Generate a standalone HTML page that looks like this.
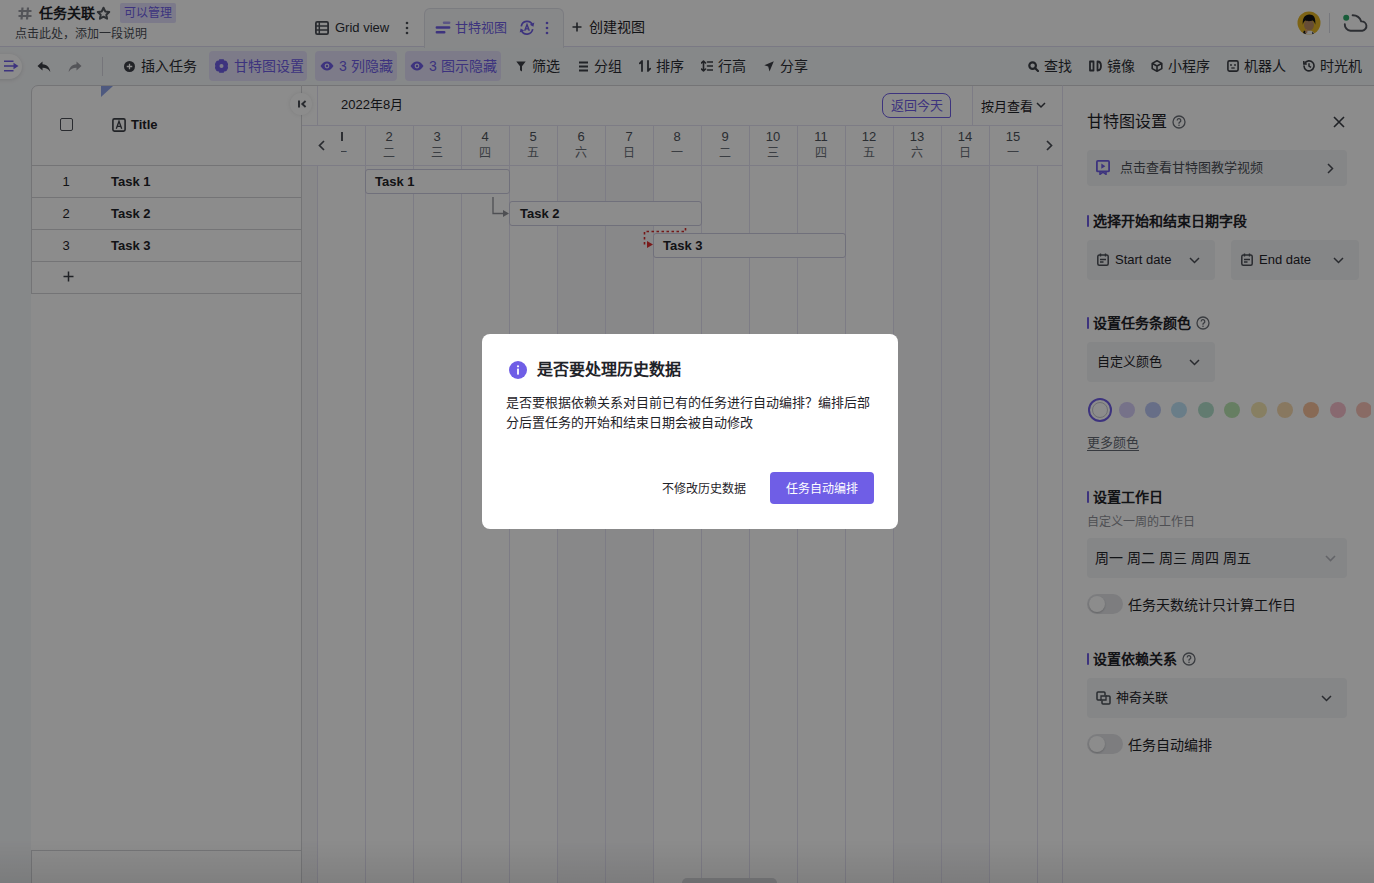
<!DOCTYPE html>
<html lang="zh-CN"><head><meta charset="utf-8">
<style>
*{box-sizing:border-box;margin:0;padding:0}
html,body{width:1374px;height:883px;overflow:hidden}
body{font-family:"Liberation Sans",sans-serif;background:#f5f7f9;color:#1f2329;position:relative}
.a{position:absolute;white-space:nowrap}
svg{display:block}
.t14{font-size:14px;line-height:20px}
.t13{font-size:13px;line-height:18px}
.t12{font-size:12px;line-height:16px}
.pur{color:#6f5ee6}
</style></head><body>
<div id="app" class="a" style="left:0;top:0;width:1374px;height:883px">
  <!-- header -->
  <div class="a" style="left:0;top:0;width:1374px;height:47px;background:#fff;border-bottom:1px solid #dedcf0"></div>
  <svg class="a" style="left:18px;top:7px" width="14" height="13" viewBox="0 0 14 13"><path d="M4.5 0.5L3.5 12.5M10 0.5L9 12.5M0.5 4H13.5M0.5 9H13.5" stroke="#9a9ca3" stroke-width="2.2" fill="none"/></svg>
  <div class="a" style="left:39px;top:3px;font-size:14px;line-height:20px;font-weight:bold;color:#1f2329">任务关联</div>
  <svg class="a" style="left:95.5px;top:5.5px" width="15" height="15" viewBox="0 0 24 24"><path d="M12 2.8l2.8 5.9 6.4.8-4.7 4.4 1.2 6.4L12 17.1l-5.7 3.2 1.2-6.4-4.7-4.4 6.4-.8z" fill="none" stroke="#555960" stroke-width="3.2" stroke-linejoin="round"/></svg>
  <div class="a" style="left:120px;top:3px;width:56px;height:20px;background:#e2defc;border-radius:2px;font-size:12px;line-height:20px;text-align:center;color:#6f5ee6">可以管理</div>
  <div class="a" style="left:15px;top:26px;font-size:12px;line-height:17px;color:#4b4f57">点击此处，添加一段说明</div>
  <!-- tabs -->
  <svg class="a" style="left:315px;top:21px" width="14" height="14" viewBox="0 0 14 14"><rect x="0.9" y="0.9" width="12.2" height="12.2" rx="1.3" fill="none" stroke="#4b4f57" stroke-width="1.8"/><path d="M1 4.9h12M1 9.1h12M4.3 1v12" stroke="#4b4f57" stroke-width="1.5"/></svg>
  <div class="a" style="left:335px;top:18px;font-size:13px;line-height:20px;color:#2b2f36">Grid view</div>
  <svg class="a" style="left:405px;top:21px" width="4" height="14" viewBox="0 0 4 14"><circle cx="2" cy="2" r="1.3" fill="#4b4f57"/><circle cx="2" cy="7" r="1.3" fill="#4b4f57"/><circle cx="2" cy="12" r="1.3" fill="#4b4f57"/></svg>
  <div class="a" style="left:424px;top:8px;width:140px;height:40px;background:#f6f7f9;border:1px solid #e1e2ea;border-bottom:none;border-radius:6px 6px 0 0"></div>
  <svg class="a" style="left:435px;top:20px" width="16" height="15" viewBox="0 0 16 15"><path d="M9 2.8h5.2" stroke="#a79cf2" stroke-width="2.4" stroke-linecap="round"/><path d="M1.8 7.5h12.4M1.8 12.2h7.5" stroke="#6f5ee6" stroke-width="2.4" stroke-linecap="round"/></svg>
  <div class="a" style="left:455px;top:18px;font-size:13px;line-height:20px;color:#6f5ee6">甘特视图</div>
  <svg class="a" style="left:519px;top:20px" width="16" height="15" viewBox="0 0 16 15"><path d="M2.3 6.3A5.9 5.9 0 0 1 13.5 4.8M13.7 9.2A5.9 5.9 0 0 1 2.5 10.6" fill="none" stroke="#6f5ee6" stroke-width="1.7"/><path d="M15.3 2.6l-0.9 4.1-3.6-1.9z" fill="#6f5ee6"/><path d="M0.7 12.6l0.9-4.1 3.6 1.9z" fill="#6f5ee6"/><path d="M5.7 10.8L8 4.6l2.3 6.2M6.5 8.9h3" fill="none" stroke="#6f5ee6" stroke-width="1.4"/></svg>
  <svg class="a" style="left:545px;top:21px" width="4" height="14" viewBox="0 0 4 14"><circle cx="2" cy="2" r="1.3" fill="#6f5ee6"/><circle cx="2" cy="7" r="1.3" fill="#6f5ee6"/><circle cx="2" cy="12" r="1.3" fill="#6f5ee6"/></svg>
  <svg class="a" style="left:572px;top:22px" width="10" height="10" viewBox="0 0 10 10"><path d="M5 0.5v9M0.5 5h9" stroke="#3b3e45" stroke-width="1.6"/></svg>
  <div class="a" style="left:589px;top:17px;font-size:14px;line-height:20px;color:#1f2329">创建视图</div>

  <!-- toolbar -->
  <div class="a" style="left:-12px;top:54px;width:34px;height:25px;background:#fff;border-radius:13px;box-shadow:0 1px 4px rgba(0,0,0,0.12)"></div>
  <svg class="a" style="left:4px;top:60px" width="15" height="12" viewBox="0 0 15 12"><path d="M0 1.3h9.5M0 6h10M0 10.7h9.5" stroke="#6f5ee6" stroke-width="1.5"/><path d="M9.5 2.8L14.5 6l-5 3.2z" fill="#6f5ee6"/></svg>
  <svg class="a" style="left:36.5px;top:60.5px" width="14" height="12" viewBox="0 0 14 12"><path d="M5.5 0.5L0.5 5l5 4.5V6.8c3.5 0 6 1 7.8 4.2C13 7 10.5 3.8 5.5 3.3z" fill="#3b3e45"/></svg>
  <svg class="a" style="left:68px;top:60.5px" width="14" height="12" viewBox="0 0 14 12"><path d="M8.5 0.5L13.5 5l-5 4.5V6.8C5 6.8 2.5 7.8 0.7 11 1 7 3.5 3.8 8.5 3.3z" fill="#9a9ca3"/></svg>
  <div class="a" style="left:102px;top:57px;width:1px;height:19px;background:#d5d6de"></div>
  <svg class="a" style="left:124px;top:61px" width="11" height="11" viewBox="0 0 12 12"><circle cx="6" cy="6" r="6" fill="#3d4047"/><path d="M6 3v6M3 6h6" stroke="#fff" stroke-width="1.4"/></svg>
  <div class="a t14" style="left:141px;top:56px;color:#2a2d33">插入任务</div>
  <div class="a" style="left:209px;top:51px;width:98px;height:30px;background:#e4e1fa;border-radius:4px"></div>
  <svg class="a" style="left:215px;top:59px" width="13" height="14" viewBox="0 0 13 14"><path d="M3.65 2.06 L4.51 0.50 L8.49 0.50 L9.35 2.06 L11.14 2.03 L13.13 5.47 L12.20 7.00 L13.13 8.53 L11.14 11.97 L9.35 11.94 L8.49 13.50 L4.51 13.50 L3.65 11.94 L1.86 11.97 L-0.13 8.53 L0.80 7.00 L-0.13 5.47 L1.86 2.03Z" fill="#6f5ee6" stroke="#6f5ee6" stroke-width="0.6" stroke-linejoin="round"/><circle cx="6.5" cy="7" r="2" fill="#e4e1fa"/></svg>
  <div class="a t14 pur" style="left:234px;top:56px">甘特图设置</div>
  <div class="a" style="left:315px;top:51px;width:82px;height:30px;background:#e4e1fa;border-radius:4px"></div>
  <svg class="a" style="left:320px;top:61px" width="14" height="10" viewBox="0 0 14 10"><path d="M0.5 5C2.5 1.8 4.6 0.5 7 0.5s4.5 1.3 6.5 4.5C11.5 8.2 9.4 9.5 7 9.5S2.5 8.2 0.5 5z" fill="#6f5ee6"/><circle cx="7" cy="5" r="2.4" fill="#e4e1fa"/><circle cx="7" cy="5" r="1.2" fill="#6f5ee6"/></svg>
  <div class="a t14 pur" style="left:339px;top:56px">3 列隐藏</div>
  <div class="a" style="left:405px;top:51px;width:96px;height:30px;background:#e4e1fa;border-radius:4px"></div>
  <svg class="a" style="left:410px;top:61px" width="14" height="10" viewBox="0 0 14 10"><path d="M0.5 5C2.5 1.8 4.6 0.5 7 0.5s4.5 1.3 6.5 4.5C11.5 8.2 9.4 9.5 7 9.5S2.5 8.2 0.5 5z" fill="#6f5ee6"/><circle cx="7" cy="5" r="2.4" fill="#e4e1fa"/><circle cx="7" cy="5" r="1.2" fill="#6f5ee6"/></svg>
  <div class="a t14 pur" style="left:429px;top:56px">3 图示隐藏</div>
  <svg class="a" style="left:516px;top:61px" width="10" height="11" viewBox="0 0 10 11"><path d="M0.3 0.5h9.4L6 5.2V10.5L4 9.3V5.2z" fill="#3d4047"/></svg>
  <div class="a t14" style="left:532px;top:56px;color:#2a2d33">筛选</div>
  <svg class="a" style="left:579px;top:61px" width="9" height="11" viewBox="0 0 9 11"><path d="M0.5 1.5h8M0.5 5.5h8M0.5 9.5h8" stroke="#3d4047" stroke-width="2" stroke-linecap="round"/></svg>
  <div class="a t14" style="left:594px;top:56px;color:#2a2d33">分组</div>
  <svg class="a" style="left:639px;top:60px" width="12" height="12" viewBox="0 0 12 12"><path d="M3 11V1L0.8 3.3M9 1v10l2.2-2.3" fill="none" stroke="#3d4047" stroke-width="1.8" stroke-linecap="round" stroke-linejoin="round"/></svg>
  <div class="a t14" style="left:656px;top:56px;color:#2a2d33">排序</div>
  <svg class="a" style="left:701px;top:60px" width="12" height="12" viewBox="0 0 12 12"><path d="M2.5 1v10M0.5 3l2-2 2 2M0.5 9l2 2 2-2M6.5 2h5M6.5 6h5M6.5 10h5" fill="none" stroke="#3d4047" stroke-width="1.6" stroke-linecap="round" stroke-linejoin="round"/></svg>
  <div class="a t14" style="left:718px;top:56px;color:#2a2d33">行高</div>
  <svg class="a" style="left:764px;top:61px" width="10" height="11" viewBox="0 0 10 11"><path d="M9.8 0.2L0.3 4.2l3.9 1.4 1.3 4.9z" fill="#3d4047"/></svg>
  <div class="a t14" style="left:780px;top:56px;color:#2a2d33">分享</div>
  <svg class="a" style="left:1028px;top:61px" width="11" height="11" viewBox="0 0 11 11"><circle cx="4.6" cy="4.6" r="3.3" fill="none" stroke="#3d4047" stroke-width="2.2"/><path d="M7 7l3 3" stroke="#3d4047" stroke-width="2.2" stroke-linecap="round"/></svg>
  <div class="a t14" style="left:1044px;top:56px;color:#2a2d33">查找</div>
  <svg class="a" style="left:1089px;top:60px" width="13" height="12" viewBox="0 0 13 12"><path d="M1 1.5h3.5v9H1zM8.5 1.5c2.3 0 3.5 2 3.5 4.5s-1.2 4.5-3.5 4.5z" fill="none" stroke="#3d4047" stroke-width="1.8" stroke-linejoin="round"/></svg>
  <div class="a t14" style="left:1107px;top:56px;color:#2a2d33">镜像</div>
  <svg class="a" style="left:1151px;top:60px" width="12" height="12" viewBox="0 0 12 12"><path d="M6 0.8l4.8 2.6v5.2L6 11.2 1.2 8.6V3.4zM1.4 3.5L6 6l4.6-2.5M6 6v5" fill="none" stroke="#3d4047" stroke-width="1.6" stroke-linejoin="round"/></svg>
  <div class="a t14" style="left:1168px;top:56px;color:#2a2d33">小程序</div>
  <svg class="a" style="left:1227px;top:60px" width="12" height="12" viewBox="0 0 12 12"><rect x="0.9" y="0.9" width="10.2" height="10.2" rx="1.5" fill="none" stroke="#3d4047" stroke-width="1.6"/><circle cx="4" cy="5" r="0.9" fill="#3d4047"/><circle cx="8" cy="5" r="0.9" fill="#3d4047"/><path d="M4.3 8h3.4" stroke="#3d4047" stroke-width="1.3"/></svg>
  <div class="a t14" style="left:1244px;top:56px;color:#2a2d33">机器人</div>
  <svg class="a" style="left:1303px;top:60px" width="12" height="12" viewBox="0 0 12 12"><path d="M1.6 3.5A5 5 0 1 1 1 6" fill="none" stroke="#3d4047" stroke-width="1.6" stroke-linecap="round"/><path d="M0.8 1v3h3" fill="none" stroke="#3d4047" stroke-width="1.5"/><path d="M6 3.3V6.2l2 1.2" fill="none" stroke="#3d4047" stroke-width="1.5"/></svg>
  <div class="a t14" style="left:1320px;top:56px;color:#2a2d33">时光机</div>

  <!-- grid left panel -->
  <div class="a" style="left:31px;top:85px;width:271px;height:820px;background:#fff;border:1px solid #d3d4d8;border-radius:7px 0 0 0"></div>
  <svg class="a" style="left:101px;top:86px" width="12" height="11" viewBox="0 0 12 11"><path d="M0 0h12L0 11z" fill="#8fa3e8"/></svg>
  <div class="a" style="left:60px;top:118px;width:13px;height:13px;border:1.5px solid #4b4f57;border-radius:2px"></div>
  <svg class="a" style="left:112px;top:118px" width="14" height="14" viewBox="0 0 14 14"><rect x="0.9" y="0.9" width="12.2" height="12.2" rx="1.5" fill="none" stroke="#3d4047" stroke-width="1.6"/><path d="M4.3 10.8L7 3.2l2.7 7.6M5.2 8.3h3.6" fill="none" stroke="#3d4047" stroke-width="1.3"/></svg>
  <div class="a t13" style="left:131px;top:116px;font-weight:bold;color:#1f2329">Title</div>
  <div class="a" style="left:32px;top:165px;width:270px;height:1px;background:#d3d4d8"></div>
  <div class="a" style="left:32px;top:197px;width:270px;height:1px;background:#d3d4d8"></div>
  <div class="a" style="left:32px;top:229px;width:270px;height:1px;background:#d3d4d8"></div>
  <div class="a" style="left:32px;top:261px;width:270px;height:1px;background:#d3d4d8"></div>
  <div class="a" style="left:32px;top:293px;width:270px;height:1px;background:#d3d4d8"></div>
  <div class="a" style="left:32px;top:850px;width:270px;height:1px;background:#d3d4d8"></div>
  <div class="a" style="left:31px;top:294px;width:1px;height:556px;background:#fff"></div>
  <div class="a t13" style="left:56px;top:173px;width:20px;text-align:center">1</div>
  <div class="a t13" style="left:56px;top:205px;width:20px;text-align:center">2</div>
  <div class="a t13" style="left:56px;top:237px;width:20px;text-align:center">3</div>
  <svg class="a" style="left:63px;top:271px" width="11" height="11" viewBox="0 0 11 11"><path d="M5.5 0.5v10M0.5 5.5h10" stroke="#3b3e45" stroke-width="1.5"/></svg>
  <div class="a t13" style="left:111px;top:173px;font-weight:bold">Task 1</div>
  <div class="a t13" style="left:111px;top:205px;font-weight:bold">Task 2</div>
  <div class="a t13" style="left:111px;top:237px;font-weight:bold">Task 3</div>
  <!-- gantt -->
  <div class="a" style="left:302px;top:85px;width:760px;height:820px;background:#fff;border-top:1px solid #d3d4d8"></div>
  <div class="a" style="left:302px;top:166px;width:15px;height:720px;background:#f7f7f9"></div>
  <div class="a" style="left:557px;top:166px;width:48px;height:720px;background:#f8f8fa"></div>
  <div class="a" style="left:605px;top:166px;width:48px;height:720px;background:#f8f8fa"></div>
  <div class="a" style="left:893px;top:166px;width:48px;height:720px;background:#f8f8fa"></div>
  <div class="a" style="left:941px;top:166px;width:48px;height:720px;background:#f8f8fa"></div>
  <div class="a" style="left:317px;top:86px;width:1px;height:39px;background:#e4e2f2"></div>
  <div class="a" style="left:317px;top:165px;width:1px;height:720px;background:#e4e2f2"></div>
  <div class="a" style="left:302px;top:125px;width:760px;height:1px;background:#e4e2f2"></div>
  <div class="a" style="left:302px;top:165px;width:760px;height:1px;background:#e4e2f2"></div>
  <div class="a" style="left:972px;top:86px;width:1px;height:39px;background:#e4e2f2"></div>
  <div class="a" style="left:341.2px;top:132px;width:1.8px;height:9px;background:#51555c"></div>
  <div class="a" style="left:317px;top:145px;width:48px;text-align:center;font-size:12px;line-height:17px;color:#6b7078">一</div>
  <div class="a" style="left:365px;top:126px;width:1px;height:39px;background:#e4e2f2"></div>
  <div class="a" style="left:365px;top:166px;width:1px;height:720px;background:#e4e2f2"></div>
  <div class="a" style="left:365px;top:128px;width:48px;text-align:center;font-size:13px;line-height:18px;color:#4e535b">2</div>
  <div class="a" style="left:365px;top:145px;width:48px;text-align:center;font-size:12px;line-height:17px;color:#6b7078">二</div>
  <div class="a" style="left:413px;top:126px;width:1px;height:39px;background:#e4e2f2"></div>
  <div class="a" style="left:413px;top:166px;width:1px;height:720px;background:#e4e2f2"></div>
  <div class="a" style="left:413px;top:128px;width:48px;text-align:center;font-size:13px;line-height:18px;color:#4e535b">3</div>
  <div class="a" style="left:413px;top:145px;width:48px;text-align:center;font-size:12px;line-height:17px;color:#6b7078">三</div>
  <div class="a" style="left:461px;top:126px;width:1px;height:39px;background:#e4e2f2"></div>
  <div class="a" style="left:461px;top:166px;width:1px;height:720px;background:#e4e2f2"></div>
  <div class="a" style="left:461px;top:128px;width:48px;text-align:center;font-size:13px;line-height:18px;color:#4e535b">4</div>
  <div class="a" style="left:461px;top:145px;width:48px;text-align:center;font-size:12px;line-height:17px;color:#6b7078">四</div>
  <div class="a" style="left:509px;top:126px;width:1px;height:39px;background:#e4e2f2"></div>
  <div class="a" style="left:509px;top:166px;width:1px;height:720px;background:#e4e2f2"></div>
  <div class="a" style="left:509px;top:128px;width:48px;text-align:center;font-size:13px;line-height:18px;color:#4e535b">5</div>
  <div class="a" style="left:509px;top:145px;width:48px;text-align:center;font-size:12px;line-height:17px;color:#6b7078">五</div>
  <div class="a" style="left:557px;top:126px;width:1px;height:39px;background:#e4e2f2"></div>
  <div class="a" style="left:557px;top:166px;width:1px;height:720px;background:#e4e2f2"></div>
  <div class="a" style="left:557px;top:128px;width:48px;text-align:center;font-size:13px;line-height:18px;color:#4e535b">6</div>
  <div class="a" style="left:557px;top:145px;width:48px;text-align:center;font-size:12px;line-height:17px;color:#6b7078">六</div>
  <div class="a" style="left:605px;top:126px;width:1px;height:39px;background:#e4e2f2"></div>
  <div class="a" style="left:605px;top:166px;width:1px;height:720px;background:#e4e2f2"></div>
  <div class="a" style="left:605px;top:128px;width:48px;text-align:center;font-size:13px;line-height:18px;color:#4e535b">7</div>
  <div class="a" style="left:605px;top:145px;width:48px;text-align:center;font-size:12px;line-height:17px;color:#6b7078">日</div>
  <div class="a" style="left:653px;top:126px;width:1px;height:39px;background:#e4e2f2"></div>
  <div class="a" style="left:653px;top:166px;width:1px;height:720px;background:#e4e2f2"></div>
  <div class="a" style="left:653px;top:128px;width:48px;text-align:center;font-size:13px;line-height:18px;color:#4e535b">8</div>
  <div class="a" style="left:653px;top:145px;width:48px;text-align:center;font-size:12px;line-height:17px;color:#6b7078">一</div>
  <div class="a" style="left:701px;top:126px;width:1px;height:39px;background:#e4e2f2"></div>
  <div class="a" style="left:701px;top:166px;width:1px;height:720px;background:#e4e2f2"></div>
  <div class="a" style="left:701px;top:128px;width:48px;text-align:center;font-size:13px;line-height:18px;color:#4e535b">9</div>
  <div class="a" style="left:701px;top:145px;width:48px;text-align:center;font-size:12px;line-height:17px;color:#6b7078">二</div>
  <div class="a" style="left:749px;top:126px;width:1px;height:39px;background:#e4e2f2"></div>
  <div class="a" style="left:749px;top:166px;width:1px;height:720px;background:#e4e2f2"></div>
  <div class="a" style="left:749px;top:128px;width:48px;text-align:center;font-size:13px;line-height:18px;color:#4e535b">10</div>
  <div class="a" style="left:749px;top:145px;width:48px;text-align:center;font-size:12px;line-height:17px;color:#6b7078">三</div>
  <div class="a" style="left:797px;top:126px;width:1px;height:39px;background:#e4e2f2"></div>
  <div class="a" style="left:797px;top:166px;width:1px;height:720px;background:#e4e2f2"></div>
  <div class="a" style="left:797px;top:128px;width:48px;text-align:center;font-size:13px;line-height:18px;color:#4e535b">11</div>
  <div class="a" style="left:797px;top:145px;width:48px;text-align:center;font-size:12px;line-height:17px;color:#6b7078">四</div>
  <div class="a" style="left:845px;top:126px;width:1px;height:39px;background:#e4e2f2"></div>
  <div class="a" style="left:845px;top:166px;width:1px;height:720px;background:#e4e2f2"></div>
  <div class="a" style="left:845px;top:128px;width:48px;text-align:center;font-size:13px;line-height:18px;color:#4e535b">12</div>
  <div class="a" style="left:845px;top:145px;width:48px;text-align:center;font-size:12px;line-height:17px;color:#6b7078">五</div>
  <div class="a" style="left:893px;top:126px;width:1px;height:39px;background:#e4e2f2"></div>
  <div class="a" style="left:893px;top:166px;width:1px;height:720px;background:#e4e2f2"></div>
  <div class="a" style="left:893px;top:128px;width:48px;text-align:center;font-size:13px;line-height:18px;color:#4e535b">13</div>
  <div class="a" style="left:893px;top:145px;width:48px;text-align:center;font-size:12px;line-height:17px;color:#6b7078">六</div>
  <div class="a" style="left:941px;top:126px;width:1px;height:39px;background:#e4e2f2"></div>
  <div class="a" style="left:941px;top:166px;width:1px;height:720px;background:#e4e2f2"></div>
  <div class="a" style="left:941px;top:128px;width:48px;text-align:center;font-size:13px;line-height:18px;color:#4e535b">14</div>
  <div class="a" style="left:941px;top:145px;width:48px;text-align:center;font-size:12px;line-height:17px;color:#6b7078">日</div>
  <div class="a" style="left:989px;top:126px;width:1px;height:39px;background:#e4e2f2"></div>
  <div class="a" style="left:989px;top:166px;width:1px;height:720px;background:#e4e2f2"></div>
  <div class="a" style="left:989px;top:128px;width:48px;text-align:center;font-size:13px;line-height:18px;color:#4e535b">15</div>
  <div class="a" style="left:989px;top:145px;width:48px;text-align:center;font-size:12px;line-height:17px;color:#6b7078">一</div>
  <div class="a" style="left:1037px;top:166px;width:1px;height:720px;background:#e4e2f2"></div>
  <div class="a" style="left:302px;top:126px;width:39px;height:39px;background:#fff"></div>
  <svg class="a" style="left:318px;top:140px" width="7" height="11" viewBox="0 0 7 11"><path d="M6 1L1.5 5.5 6 10" fill="none" stroke="#4b4f57" stroke-width="1.7"/></svg>
  <div class="a" style="left:1037px;top:126px;width:25px;height:39px;background:#fff"></div>
  <svg class="a" style="left:1046px;top:140px" width="7" height="11" viewBox="0 0 7 11"><path d="M1 1l4.5 4.5L1 10" fill="none" stroke="#4b4f57" stroke-width="1.7"/></svg>
  <div class="a" style="left:290px;top:93px;width:22px;height:22px;border-radius:50%;background:#fff;box-shadow:0 0 4px rgba(0,0,0,0.10)"></div>
  <svg class="a" style="left:297px;top:99px" width="10" height="10" viewBox="0 0 10 10"><path d="M2 1.5v7" stroke="#4b4f57" stroke-width="2"/><path d="M8.6 2L5.3 5l3.3 3" fill="none" stroke="#4b4f57" stroke-width="1.9"/></svg>
  <div class="a t13" style="left:341px;top:96px;color:#1f2329">2022年8月</div>
  <div class="a" style="left:882px;top:93px;width:69px;height:25px;border:1.5px solid #6f5ee6;border-radius:8px 8px 2px 8px;font-size:13px;line-height:24px;text-align:center;color:#6f5ee6">返回今天</div>
  <div class="a t13" style="left:981px;top:98px;color:#1f2329">按月查看</div>
  <svg class="a" style="left:1036px;top:102px" width="10" height="7" viewBox="0 0 10 7"><path d="M1 1l4 4 4-4" fill="none" stroke="#3b3e45" stroke-width="1.5"/></svg>
  <!-- bars -->
  <div class="a" style="left:365px;top:169px;width:145px;height:25px;background:#fff;border:1px solid #cdcce0;border-radius:3px"></div>
  <div class="a t13" style="left:375px;top:173px;font-weight:bold">Task 1</div>
  <div class="a" style="left:509px;top:201px;width:193px;height:25px;background:#fff;border:1px solid #cdcce0;border-radius:3px"></div>
  <div class="a t13" style="left:520px;top:205px;font-weight:bold">Task 2</div>
  <div class="a" style="left:653px;top:233px;width:193px;height:25px;background:#fff;border:1px solid #cdcce0;border-radius:3px"></div>
  <div class="a t13" style="left:663px;top:237px;font-weight:bold">Task 3</div>
  <svg class="a" style="left:480px;top:190px" width="220" height="70" viewBox="480 190 220 70">
    <path d="M493 197V213.5H504" fill="none" stroke="#8f9198" stroke-width="1.3"/>
    <path d="M503 210l6 3.5-6 3.5z" fill="#8f9198"/>
    <path d="M685.5 228V231.5H644.5V244.5H648" fill="none" stroke="#d42a2a" stroke-width="1.6" stroke-dasharray="2.5 2.5"/>
    <path d="M647 241l6 3.5-6 3.5z" fill="#e03131"/>
  </svg>
  <!-- right panel -->
  <div class="a" style="left:1062px;top:85px;width:312px;height:800px;background:#fff;border-left:1px solid #e4e2f2;border-top:1px solid #d3d4d8"></div>

  <div class="a" style="left:1087px;top:112px;font-size:16px;line-height:20px;color:#1f2329">甘特图设置</div>
  <svg class="a" style="left:1172px;top:115px" width="14" height="14" viewBox="0 0 14 14"><circle cx="7" cy="7" r="6" fill="none" stroke="#6b6f77" stroke-width="1.3"/><path d="M5.2 5.5a1.8 1.8 0 1 1 2.6 1.6c-.6.3-.8.6-.8 1.2v.4" fill="none" stroke="#6b6f77" stroke-width="1.3"/><circle cx="7" cy="10.3" r="0.8" fill="#6b6f77"/></svg>
  <svg class="a" style="left:1333px;top:116px" width="12" height="12" viewBox="0 0 12 12"><path d="M1 1l10 10M11 1L1 11" stroke="#3b3e45" stroke-width="1.6"/></svg>
  <div class="a" style="left:1087px;top:150px;width:260px;height:36px;background:#f3f4f6;border-radius:4px"></div>
  <svg class="a" style="left:1096px;top:160px" width="14" height="15" viewBox="0 0 14 15"><rect x="0.9" y="0.9" width="12.2" height="10.5" rx="1" fill="none" stroke="#6f5ee6" stroke-width="1.8"/><path d="M5.3 3.6v5.2L9.4 6.2z" fill="#6f5ee6"/><path d="M4 11.5v2.8l3-2.3 3 2.3v-2.8" fill="none" stroke="#6f5ee6" stroke-width="1.6"/></svg>
  <div class="a t13" style="left:1120px;top:159px;color:#4b4f57">点击查看甘特图教学视频</div>
  <svg class="a" style="left:1327px;top:163px" width="7" height="11" viewBox="0 0 7 11"><path d="M1 1l4.5 4.5L1 10" fill="none" stroke="#4b4f57" stroke-width="1.5"/></svg>
  <div class="a" style="left:1087px;top:215px;width:2px;height:12px;background:#6f5ee6;border-radius:1px"></div>
  <div class="a t14" style="left:1093px;top:211px;font-weight:bold;color:#1f2329">选择开始和结束日期字段</div>
  <div class="a" style="left:1087px;top:240px;width:128px;height:40px;background:#f3f4f6;border-radius:4px"></div>
  <svg class="a" style="left:1097px;top:253px" width="12" height="13" viewBox="0 0 12 13"><rect x="0.8" y="2" width="10.4" height="10.2" rx="1.5" fill="none" stroke="#4b4f57" stroke-width="1.5"/><path d="M3.5 0.5v3M8.5 0.5v3M3 6.5h6M3 9h3.5" stroke="#4b4f57" stroke-width="1.4"/></svg>
  <div class="a t13" style="left:1115px;top:251px;color:#1f2329">Start date</div>
  <svg class="a" style="left:1189px;top:257px" width="11" height="7" viewBox="0 0 11 7"><path d="M1 1l4.5 4.5L10 1" fill="none" stroke="#4b4f57" stroke-width="1.5"/></svg>
  <div class="a" style="left:1231px;top:240px;width:128px;height:40px;background:#f3f4f6;border-radius:4px"></div>
  <svg class="a" style="left:1241px;top:253px" width="12" height="13" viewBox="0 0 12 13"><rect x="0.8" y="2" width="10.4" height="10.2" rx="1.5" fill="none" stroke="#4b4f57" stroke-width="1.5"/><path d="M3.5 0.5v3M8.5 0.5v3M3 6.5h6M3 9h3.5" stroke="#4b4f57" stroke-width="1.4"/></svg>
  <div class="a t13" style="left:1259px;top:251px;color:#1f2329">End date</div>
  <svg class="a" style="left:1333px;top:257px" width="11" height="7" viewBox="0 0 11 7"><path d="M1 1l4.5 4.5L10 1" fill="none" stroke="#4b4f57" stroke-width="1.5"/></svg>
  <div class="a" style="left:1087px;top:317px;width:2px;height:12px;background:#6f5ee6;border-radius:1px"></div>
  <div class="a t14" style="left:1093px;top:313px;font-weight:bold;color:#1f2329">设置任务条颜色</div>
  <svg class="a" style="left:1196px;top:316px" width="14" height="14" viewBox="0 0 14 14"><circle cx="7" cy="7" r="6" fill="none" stroke="#6b6f77" stroke-width="1.3"/><path d="M5.2 5.5a1.8 1.8 0 1 1 2.6 1.6c-.6.3-.8.6-.8 1.2v.4" fill="none" stroke="#6b6f77" stroke-width="1.3"/><circle cx="7" cy="10.3" r="0.8" fill="#6b6f77"/></svg>
  <div class="a" style="left:1087px;top:342px;width:128px;height:40px;background:#f3f4f6;border-radius:4px"></div>
  <div class="a t13" style="left:1097px;top:353px;color:#1f2329">自定义颜色</div>
  <svg class="a" style="left:1189px;top:359px" width="11" height="7" viewBox="0 0 11 7"><path d="M1 1l4.5 4.5L10 1" fill="none" stroke="#4b4f57" stroke-width="1.5"/></svg>
  <div class="a" style="left:1088px;top:398px;width:24px;height:24px;border-radius:50%;border:2px solid #6f5ee6"></div>
  <div class="a" style="left:1092px;top:402px;width:16px;height:16px;border-radius:50%;border:1px solid #c9cbd1;background:#fff"></div>

  <div class="a" style="left:1119px;top:402px;width:16px;height:16px;border-radius:50%;background:#d8cffa"></div>
  <div class="a" style="left:1145px;top:402px;width:16px;height:16px;border-radius:50%;background:#bcc8f6"></div>
  <div class="a" style="left:1171px;top:402px;width:16px;height:16px;border-radius:50%;background:#c0e3f8"></div>
  <div class="a" style="left:1198px;top:402px;width:16px;height:16px;border-radius:50%;background:#b2e1cd"></div>
  <div class="a" style="left:1224px;top:402px;width:16px;height:16px;border-radius:50%;background:#bbe5b2"></div>
  <div class="a" style="left:1251px;top:402px;width:16px;height:16px;border-radius:50%;background:#f6e7b2"></div>
  <div class="a" style="left:1277px;top:402px;width:16px;height:16px;border-radius:50%;background:#f7dab0"></div>
  <div class="a" style="left:1303px;top:402px;width:16px;height:16px;border-radius:50%;background:#f7c19b"></div>
  <div class="a" style="left:1330px;top:402px;width:16px;height:16px;border-radius:50%;background:#f7c0cd"></div>
  <div class="a" style="left:1356px;top:402px;width:15px;height:16px;overflow:hidden"><div class="a" style="left:0;top:0;width:16px;height:16px;border-radius:50%;background:#f9c4b9"></div></div>
  <div class="a t13" style="left:1087px;top:434px;color:#646a73;text-decoration:underline;text-underline-offset:3px">更多颜色</div>
  <div class="a" style="left:1087px;top:491px;width:2px;height:12px;background:#6f5ee6;border-radius:1px"></div>
  <div class="a t14" style="left:1093px;top:487px;font-weight:bold;color:#1f2329">设置工作日</div>
  <div class="a t12" style="left:1087px;top:514px;color:#8f9198">自定义一周的工作日</div>
  <div class="a" style="left:1087px;top:538px;width:260px;height:40px;background:#f3f4f6;border-radius:4px"></div>
  <div class="a t14" style="left:1095px;top:548px;color:#1f2329;word-spacing:0px">周一 周二 周三 周四 周五</div>
  <svg class="a" style="left:1325px;top:555px" width="11" height="7" viewBox="0 0 11 7"><path d="M1 1l4.5 4.5L10 1" fill="none" stroke="#b5b7be" stroke-width="1.6"/></svg>
  <div class="a" style="left:1087px;top:594px;width:36px;height:20px;border-radius:10px;background:#e3e4e8"></div>
  <div class="a" style="left:1089px;top:596px;width:16px;height:16px;border-radius:50%;background:#fff;box-shadow:0 1px 2px rgba(0,0,0,0.2)"></div>
  <div class="a t14" style="left:1128px;top:595px;color:#1f2329">任务天数统计只计算工作日</div>
  <div class="a" style="left:1087px;top:653px;width:2px;height:12px;background:#6f5ee6;border-radius:1px"></div>
  <div class="a t14" style="left:1093px;top:649px;font-weight:bold;color:#1f2329">设置依赖关系</div>
  <svg class="a" style="left:1182px;top:652px" width="14" height="14" viewBox="0 0 14 14"><circle cx="7" cy="7" r="6" fill="none" stroke="#6b6f77" stroke-width="1.3"/><path d="M5.2 5.5a1.8 1.8 0 1 1 2.6 1.6c-.6.3-.8.6-.8 1.2v.4" fill="none" stroke="#6b6f77" stroke-width="1.3"/><circle cx="7" cy="10.3" r="0.8" fill="#6b6f77"/></svg>
  <div class="a" style="left:1087px;top:678px;width:260px;height:40px;background:#f3f4f6;border-radius:4px"></div>
  <svg class="a" style="left:1096px;top:691px" width="15" height="14" viewBox="0 0 15 14"><path d="M5 9H2a1 1 0 0 1-1-1V2a1 1 0 0 1 1-1h6a1 1 0 0 1 1 1v2.5" fill="none" stroke="#4b4f57" stroke-width="1.5"/><path d="M10 5h3a1 1 0 0 1 1 1v6a1 1 0 0 1-1 1H7a1 1 0 0 1-1-1V9.5" fill="none" stroke="#4b4f57" stroke-width="1.5"/><path d="M5 5h5v4H5z" fill="none" stroke="#4b4f57" stroke-width="1.3"/></svg>
  <div class="a t13" style="left:1116px;top:689px;color:#1f2329">神奇关联</div>
  <svg class="a" style="left:1321px;top:695px" width="11" height="7" viewBox="0 0 11 7"><path d="M1 1l4.5 4.5L10 1" fill="none" stroke="#4b4f57" stroke-width="1.5"/></svg>
  <div class="a" style="left:1087px;top:734px;width:36px;height:20px;border-radius:10px;background:#e3e4e8"></div>
  <div class="a" style="left:1089px;top:736px;width:16px;height:16px;border-radius:50%;background:#fff;box-shadow:0 1px 2px rgba(0,0,0,0.2)"></div>
  <div class="a t14" style="left:1128px;top:735px;color:#1f2329">任务自动编排</div>
  <div class="a" style="left:682px;top:878px;width:95px;height:10px;border-radius:5px;background:#d9dade"></div>
  <!-- avatar / cloud -->
  <svg class="a" style="left:1297px;top:11px" width="24" height="24" viewBox="0 0 24 24"><defs><clipPath id="cav"><circle cx="12" cy="12" r="11.5"/></clipPath></defs><circle cx="12" cy="12" r="11.5" fill="#e3b526"/><g clip-path="url(#cav)"><path d="M6.5 24c0-3 2.3-4.6 5.5-4.6s5.5 1.6 5.5 4.6z" fill="#f0f0f0"/><path d="M5 25l2-5.5 2.2 1.2-1.2 4.3z" fill="#1a1a1a"/><path d="M15.5 20.5l3 4.5h-3.5z" fill="#1a1a1a"/><ellipse cx="12" cy="14" rx="5" ry="5.6" fill="#b88a63"/><path d="M5.8 13.8C5.2 7 8 3.6 12.3 3.6S18.9 6.5 18.3 13.8C17.6 11 16.5 10 15.5 9.6 14 10.4 10 10.4 8.5 9.6 7.3 10.2 6.4 11.3 5.8 13.8z" fill="#111"/><path d="M9.3 17.8l-1.3 4 2 .6 0.8-3.5z" fill="#cf9b74"/></g></svg>
  <div class="a" style="left:1329px;top:13px;width:1px;height:20px;background:#d9dae3"></div>
  <svg class="a" style="left:1340px;top:12px" width="30" height="22" viewBox="0 0 30 22"><path d="M4.8 12.2A6.2 6.2 0 0 0 10.5 18.7H22.3A4.6 4.6 0 0 0 21.2 9.4 9 9 0 0 0 12.6 3.2" fill="none" stroke="#50545c" stroke-width="1.9" stroke-linecap="round" stroke-linejoin="round"/><circle cx="6.2" cy="5.8" r="3" fill="#2eaa6a"/></svg>
</div>
<div class="a" style="left:0;top:840px;width:1374px;height:43px;background:linear-gradient(rgba(0,0,0,0),rgba(0,0,0,0.09))"></div>
<div id="mask" class="a" style="left:0;top:0;width:1374px;height:883px;background:rgba(0,0,0,0.45)"></div>
<div id="modal" class="a" style="left:482px;top:334px;width:416px;height:195px;background:#fff;border-radius:8px">
  <svg class="a" style="left:27px;top:27px" width="18" height="18" viewBox="0 0 18 18"><circle cx="9" cy="9" r="9" fill="#6f5ee6"/><rect x="8.1" y="7.6" width="1.8" height="6" fill="#fff"/><circle cx="9" cy="5.3" r="1.1" fill="#fff"/></svg>
  <div class="a" style="left:55px;top:26px;font-size:16px;line-height:20px;font-weight:bold;color:#1f2329">是否要处理历史数据</div>
  <div class="a" style="left:24px;top:59px;width:372px;font-size:13px;line-height:20px;color:#1f2329;white-space:normal">是否要根据依赖关系对目前已有的任务进行自动编排？编排后部分后置任务的开始和结束日期会被自动修改</div>
  <div class="a t12" style="left:180px;top:147px;color:#1f2329">不修改历史数据</div>
  <div class="a" style="left:288px;top:138px;width:104px;height:32px;background:#6f5ee6;border-radius:4px;color:#fff;font-size:12px;line-height:34px;text-align:center">任务自动编排</div>
</div>
</body></html>
